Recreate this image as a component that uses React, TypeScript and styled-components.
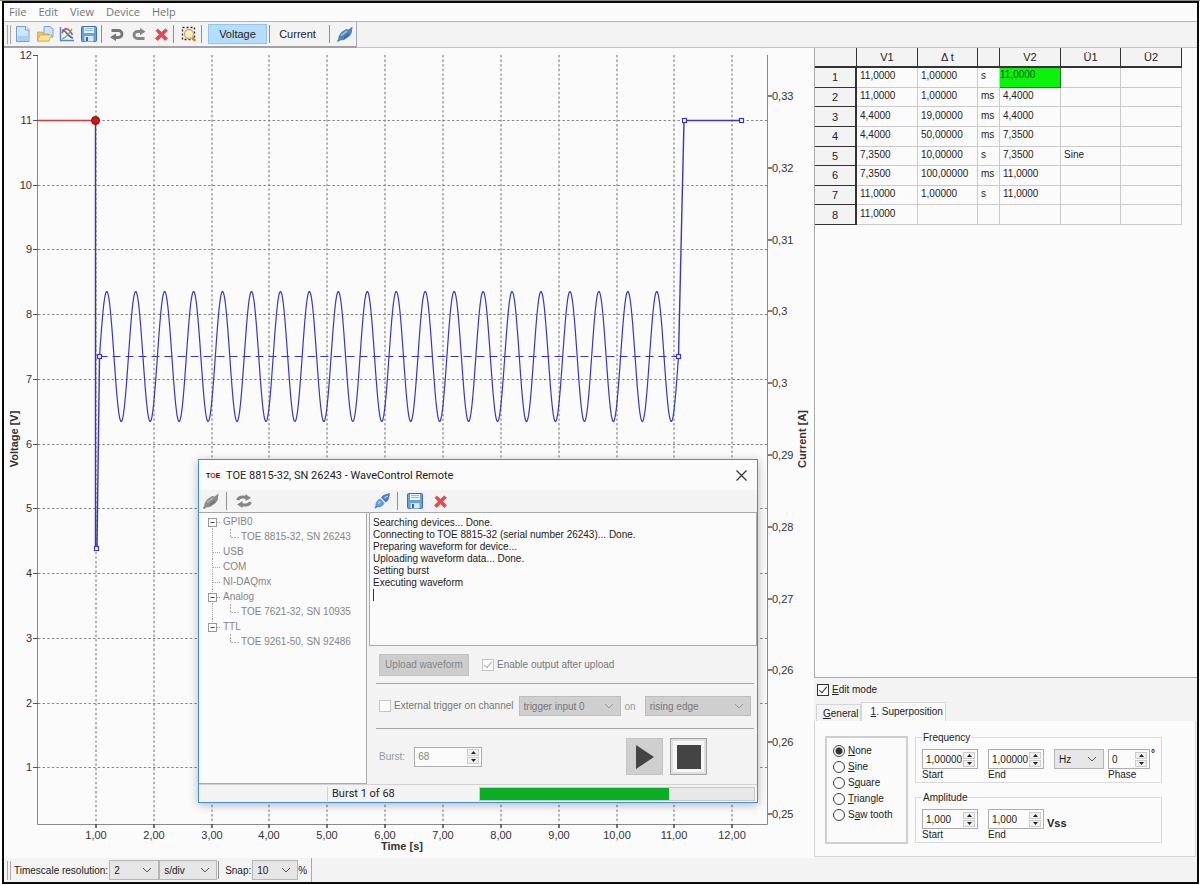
import React from "react";
import styled, { createGlobalStyle, css } from "styled-components";

const paper = "#fbfbfb";
const face = "#f3f3f3";
const line = "#a9a9a9";
const ink = "#222";
const dim = "#858585";
const blue = "#3a34c8";

const Global = createGlobalStyle`
  *, *::before, *::after { box-sizing: border-box; }
  body { margin: 0; background: #fff; }
  body, button, input, select, textarea {
    font-family: "Liberation Sans", Arial, sans-serif;
    font-size: 10px;
    color: ${ink};
  }
  button, input, textarea, select { margin: 0; }
`;

/* ---------- window frame ---------- */

const Page = styled.div`
  min-height: 100vh;
  display: flex;
  padding: 1px 1px 1px 2px;
  background: linear-gradient(#8a8d88 1px, #fff 1px);
`;
const Frame = styled.div`
  flex: 1;
  min-width: 0;
  display: flex;
  flex-direction: column;
  border: 2px solid #0a0a0a;
  background: ${face};
`;
const MenuBar = styled.nav`
  display: flex;
  align-items: center;
  gap: 12px;
  height: 19px;
  padding-left: 5px;
  background: ${paper};
  border-bottom: 1px solid #b5b5b5;
`;
const MenuItem = styled.button`
  border: 0;
  padding: 0;
  background: none;
  font-family: "Open Sans", "Noto Sans", sans-serif;
  font-size: 11px;
  line-height: 16px;
  color: #757575;
`;
const ToolStrip = styled.div`
  display: flex;
  height: 26px;
  border-bottom: 1px solid #c4c4c4;
`;
const Tools = styled.div`
  display: flex;
  align-items: center;
  height: 26px;
  padding: 0 0 0 3px;
  border-right: 1px solid ${line};
  border-bottom: 2px solid #a2a2a2;
`;
const Grip = styled.span`
  width: 4px;
  height: 19px;
  margin-right: 1px;
  border: solid ${line};
  border-width: 0 1px;
`;
const Rule = styled.span`
  width: 1px;
  height: 18px;
  margin: 0 4px 0 1px;
  background: #8f8f8f;
`;
const IconButton = styled.button`
  display: grid;
  place-items: center;
  width: 22px;
  height: 22px;
  padding: 0;
  border: 0;
  background: none;
`;
const ModeButton = styled.button<{ $on?: boolean }>`
  width: ${(p) => (p.$on ? 59 : 43)}px;
  height: 20px;
  margin: 0 ${(p) => (p.$on ? 1 : 9)}px 0 2px;
  padding: 0;
  font-size: 11px;
  border: 1px solid ${(p) => (p.$on ? "#8fc6ee" : "transparent")};
  background: ${(p) => (p.$on ? "#b5dcf8" : "none")};
`;

const Workspace = styled.main`
  flex: 1;
  display: grid;
  grid-template-columns: minmax(0, 1fr) 383px;
`;
const Left = styled.section`
  display: flex;
  flex-direction: column;
  min-width: 0;
  background: ${paper};
`;
const ChartArea = styled.div`
  position: relative;
  flex: 1;
`;
const ChartSvg = styled.svg`
  display: block;
  width: 100%;
  height: auto;
  font-size: 11px;
  fill: #333;
`;
const BottomBar = styled.div`
  display: flex;
  height: 24px;
  background: ${face};
`;
const BottomTools = styled.div`
  display: flex;
  align-items: center;
  padding: 0 4px 0 3px;
  border-right: 1px solid ${line};
`;
const BarLabel = styled.label`
  padding: 0 1px 0 2px;
  white-space: nowrap;
`;

/* ---------- shared controls ---------- */

const SelectShell = styled.span<{ $w: number; $off?: boolean }>`
  display: grid;
  grid-template-columns: 1fr 16px;
  align-items: center;
  width: ${(p) => p.$w}px;
  height: 20px;
  border: 1px solid ${(p) => (p.$off ? "#bdbdbd" : "#b5b5b5")};
  background: ${(p) => (p.$off ? "#cfcfcf" : "#e6e6e6")};
  svg {
    grid-area: 1 / 2;
    pointer-events: none;
    stroke: ${(p) => (p.$off ? "#999" : "#555")};
  }
`;
const NativeSelect = styled.select`
  grid-area: 1 / 1 / 2 / 3;
  appearance: none;
  min-width: 0;
  height: 100%;
  padding: 0 14px 0 4px;
  border: 0;
  background: none;
  &:disabled { color: #777; opacity: 1; }
`;
type SelectProps = { id?: string; label: string; w: number; off?: boolean; options: string[] };
const Select = ({ id, label, w, off, options }: SelectProps) => (
  <SelectShell $w={w} $off={off}>
    <NativeSelect id={id} aria-label={id ? undefined : label} disabled={off}>
      {options.map((o) => <option key={o}>{o}</option>)}
    </NativeSelect>
    <svg width="10" height="6" viewBox="0 0 10 6" fill="none"><path d="M1 1l4 4 4-4" /></svg>
  </SelectShell>
);

const SpinShell = styled.span<{ $w: number }>`
  display: flex;
  align-items: center;
  width: ${(p) => p.$w}px;
  height: 20px;
  padding-right: 2px;
  border: 1px solid #adadad;
  background: ${paper};
`;
const SpinInput = styled.input`
  flex: 1;
  min-width: 0;
  height: 18px;
  padding: 0 0 0 3px;
  border: 0;
  background: none;
  &:disabled { color: ${dim}; }
`;
const SpinButtons = styled.span`
  display: grid;
  width: 12px;
  gap: 1px;
`;
const SpinButton = styled.button`
  display: grid;
  place-items: center;
  height: 7px;
  padding: 0;
  border: 1px solid #ccc;
  background: #f0f0f0;
`;
type SpinProps = { id: string; w: number; value: string; off?: boolean };
const Spin = ({ id, w, value, off }: SpinProps) => (
  <SpinShell $w={w}>
    <SpinInput id={id} defaultValue={value} disabled={off} />
    <SpinButtons>
      <SpinButton aria-label="Increase"><svg width="5" height="3"><path d="M0 3L2.500 0 5 3z" fill="#222" /></svg></SpinButton>
      <SpinButton aria-label="Decrease"><svg width="5" height="3"><path d="M0 0L2.500 3 5 0z" fill="#222" /></svg></SpinButton>
    </SpinButtons>
  </SpinShell>
);

const CheckLabel = styled.label<{ $off?: boolean }>`
  display: inline-flex;
  align-items: center;
  gap: 3px;
  line-height: 14px;
  white-space: nowrap;
  color: ${(p) => (p.$off ? "#777" : ink)};
`;
const Check = styled.input.attrs({ type: "checkbox" })<{ $off?: boolean }>`
  appearance: none;
  display: grid;
  place-items: center;
  width: 12px;
  height: 12px;
  border: 1px solid ${(p) => (p.$off ? "#c4c4c4" : "#333")};
  background: ${paper};
  &:checked::after {
    content: "";
    width: 4px;
    height: 8px;
    margin-top: -2px;
    border: solid ${(p) => (p.$off ? "#aaa" : "#333")};
    border-width: 0 1px 1px 0;
    transform: rotate(40deg);
  }
`;

/* ---------- icons ---------- */

const NewIcon = () => (
  <svg width="16" height="18" viewBox="0 0 16 18">
    <path d="M1.500 1.500h9.500L14 4.500v12H1.500z" fill="#cfe6fa" stroke="#6fa0d8" />
    <path d="M2.500 11h11v5h-11z" fill="#a8d0f5" /><path d="M10.500 1.500V5H14" fill="#fff" stroke="#6fa0d8" />
  </svg>
);
const OpenIcon = () => (
  <svg width="18" height="18" viewBox="0 0 18 18">
    <path d="M8 1.500h6L17 4v8H8z" fill="#cfe3fa" stroke="#7aa2d8" />
    <path d="M1.500 7h5l1 2H13v7H1.500z" fill="#f0c766" stroke="#c39a48" strokeWidth=".7" />
    <path d="M1.500 16L4 10h12l-3 6z" fill="#fbe596" stroke="#c9a04b" strokeWidth=".7" />
  </svg>
);
const PlotIcon = () => (
  <svg width="16" height="16" viewBox="0 0 16 16" fill="none" strokeWidth="1.700">
    <path d="M1.500 1v13.500H15" stroke="#5d82ba" strokeWidth="1.400" />
    <path d="M3 7C6 1 9 1 13.500 9" stroke="#e04a4a" /><path d="M3 4c4 0 6 7 11 8" stroke="#3f6fc4" />
    <path d="M3 13c3-1 7-5 10-10" stroke="#5a9e6d" strokeWidth="1.200" />
  </svg>
);
const SaveIcon = () => (
  <svg width="16" height="16" viewBox="0 0 16 16">
    <rect x=".5" y=".5" width="15" height="15" rx="1" fill="#6a9fe2" stroke="#3c6dbd" />
    <path d="M3 1h10v6H3z" fill="#e8f3fd" /><path d="M4 2.500h8M4 4.500h8" stroke="#8ebcee" />
    <path d="M3.500 10h9v5.500h-9z" fill="#d9e9dc" /><path d="M5 11h2v4H5z" fill="#3566b8" />
  </svg>
);
const UndoIcon = () => (
  <svg width="14" height="13" viewBox="0 0 14 13">
    <path d="M1.500 2.500h7a3.500 3.500 0 0 1 0 7H5" fill="none" stroke="#777" strokeWidth="2.800" />
    <path d="M6 5.500V13L0 9.300z" fill="#777" />
  </svg>
);
const RedoIcon = () => (
  <svg width="14" height="13" viewBox="0 0 14 13">
    <path d="M12.500 10.500H5.500a3.500 3.500 0 0 1 0-7h4" fill="none" stroke="#858585" strokeWidth="2.800" />
    <path d="M8 0v7.200L13.500 3.600z" fill="#858585" />
  </svg>
);
const CrossIcon = () => (
  <svg width="13" height="13" viewBox="0 0 12 12">
    <path d="M1 2.500L2.500 1 6 4 9.500 1 11.500 2.500 8 6l3.500 3.500L9.500 11.500 6 8l-3.500 3.500L.5 9.500 4 6z" fill="#e8494d" stroke="#e0474b" strokeWidth=".8" />
  </svg>
);
const ZoomBoxIcon = () => (
  <svg width="16" height="16" viewBox="0 0 16 16" fill="none">
    <rect x="1.500" y="1.500" width="12" height="12" stroke="#333" strokeWidth="1.400" strokeDasharray="2 2" />
    <circle cx="8" cy="8" r="4.500" fill="#fbeecb" stroke="#d6a95c" strokeWidth="1.300" />
    <path d="M11.500 11.500l3 3.500" stroke="#c58a3c" strokeWidth="2.200" />
  </svg>
);
const PlugIcon = ({ gray }: { gray?: boolean }) => (
  <svg width="16" height="16" viewBox="0 0 16 16">
    <path d="M0.500 15.500L3 13" stroke={gray ? "#888" : "#6b93b8"} strokeWidth="2" />
    <path d="M1.500 14.500C.5 11 3 7 6 5l3-2 2.500.5L15.500.5 15 5C15 8 12 11 10 12l-3 2z" fill={gray ? "#8b8b8b" : "#4f83bd"} />
    <path d="M4 9.500l6-4.500" stroke={gray ? "#b0b0b0" : "#8dbbe6"} strokeWidth="1.600" />
    <path d="M7 12l5-4" stroke={gray ? "#6e6e6e" : "#2f5f9f"} strokeWidth="1.200" />
  </svg>
);
const LinkIcon = () => (
  <svg width="16" height="16" viewBox="0 0 16 16">
    <path d="M1 15l3-3" stroke="#5f8fd6" strokeWidth="2" />
    <path d="M2 13.500C1.500 10 3.500 6.500 6.500 6L10 10.500C8.500 13.500 5 14.500 2 13.500z" fill="#6a9be2" stroke="#3d6fc0" strokeWidth=".6" />
    <path d="M7.500 4.500C9 1.500 12 2 15.500.5 15 4 14.500 8.500 11.500 9z" fill="#4a80d4" stroke="#3364b5" strokeWidth=".6" />
    <path d="M4 10.500L6.500 8.500M10.500 5l3-2" stroke="#b5d2f6" strokeWidth="1.500" />
  </svg>
);
const RefreshIcon = () => (
  <svg width="16" height="14" viewBox="0 0 16 14" fill="none" stroke="#858585" strokeWidth="3">
    <path d="M1.500 6C3 2.500 7 2.500 11 3.500" /><path d="M9.500 0L15 4 9.500 7z" fill="#858585" stroke="none" />
    <path d="M14.500 8c-1 3-5 3.500-9 2.500" /><path d="M6.500 7L1 10.500 6.500 14z" fill="#858585" stroke="none" />
  </svg>
);

/* ---------- chart ---------- */

const xAt = (t: number) => 38 + t * 57.85;
const yAt = (v: number) => 55.5 + (12 - v) * 64.75;
const volts = [12, 11, 10, 9, 8, 7, 6, 5, 4, 3, 2, 1];
const secs = [1, 2, 3, 4, 5, 6, 7, 8, 9, 10, 11, 12];
const amps = ["0,33", "0,32", "0,31", "0,3", "0,3", "0,29", "0,28", "0,27", "0,26", "0,26", "0,25"];
const startX = 99.5;
const endX = 678.5;
const midY = 356.5;
const sine = Array.from({ length: 1159 }, (_, i) => {
  const x = startX + i * 0.5;
  const y = midY - 65 * Math.sin(((x - startX) / (endX - startX)) * 20 * 2 * Math.PI);
  return `${x},${y.toFixed(1)}`;
}).join(" ");
const nodes = [[96, 548], [99, 356], [678, 356], [684, 120], [741, 120]];

const Chart = () => (
  <ChartSvg viewBox="4 48 810 810" role="img" aria-label="Voltage waveform over time">
    <g stroke="#858585" strokeWidth="1.200" strokeDasharray="2.400 2.200">
      {volts.slice(1).map((v) => <path key={v} d={`M38 ${Math.floor(yAt(v))}.5H767`} />)}
      {secs.map((s) => <path key={s} d={`M${Math.round(xAt(s))} 55V822`} />)}
    </g>
    <path d="M37.500 55V824.500H767.500V55" fill="none" stroke="#8a8a8a" />
    {volts.map((v) => (
      <g key={v}>
        <path d={`M33 ${Math.floor(yAt(v))}.5h5`} stroke="#555" />
        <text x="32" y={Math.floor(yAt(v)) + 4} textAnchor="end">{v}</text>
      </g>
    ))}
    {secs.map((s) => (
      <g key={s}>
        <path d={`M${Math.round(xAt(s))} 824v4`} stroke="#444" strokeWidth="1.500" />
        <text x={Math.round(xAt(s))} y="839" textAnchor="middle">{s},00</text>
      </g>
    ))}
    {amps.map((a, i) => (
      <g key={i}>
        <path d={`M768 ${Math.round(96 + i * 71.8)}h4`} stroke="#555" strokeWidth="1.500" />
        <text x="772" y={Math.round(96 + i * 71.8) + 4}>{a}</text>
      </g>
    ))}
    <g fontWeight="bold" textAnchor="middle">
      <text x="402" y="850">Time [s]</text>
      <text transform="translate(18 439) rotate(-90)">Voltage [V]</text>
      <text transform="translate(806 439) rotate(-90)">Current [A]</text>
    </g>
    <path d={`M${startX} ${midY}H${endX}`} stroke={blue} strokeDasharray="8 5" />
    <polyline points={sine} fill="none" stroke={blue} strokeWidth="1.200" />
    <path d="M95.500 120V548M97 548L99.500 356.500M678.500 356.500L684 120.500H741" fill="none" stroke={blue} strokeWidth="1.400" />
    <path d="M38 120.500H95" stroke="#d93a3a" strokeWidth="1.300" />
    {nodes.map(([x, y]) => <rect key={x} x={x - 1.5} y={y - 1.5} width="4" height="4" fill="#fff" stroke={blue} strokeWidth="1.200" />)}
    <circle cx="95.500" cy="120.500" r="4" fill="#e01010" stroke="#6b1010" />
  </ChartSvg>
);

/* ---------- remote dialog ---------- */

const Dialog = styled.section`
  position: absolute;
  left: 194px;
  top: 411px;
  width: 560px;
  display: flex;
  flex-direction: column;
  border: 1px solid #3f8fdc;
  background: ${face};
  box-shadow: 0 2px 9px rgba(0, 0, 0, 0.28);
`;
const TitleBar = styled.header`
  display: flex;
  align-items: center;
  height: 30px;
  padding: 0 8px 0 7px;
  background: ${paper};
`;
const Title = styled.h1`
  flex: 1;
  margin: 0 0 0 5px;
  font: 400 11px Roboto, sans-serif;
  color: #222;
`;
const Logo = styled.span`
  width: 15px;
  font-size: 7px;
  font-weight: 700;
  color: #111;
  b { color: #d02020; }
`;
const CloseButton = styled.button`
  display: grid;
  padding: 2px;
  border: 0;
  background: none;
`;
const DialogTools = styled.div`
  display: grid;
  grid-template-columns: 171px 1fr;
  height: 23px;
  border-bottom: 1px solid ${line};
`;
const ToolGroup = styled.div`
  display: flex;
  align-items: center;
  padding-left: 1px;
`;
const DialogRule = styled(Rule)`
  margin: 0 6px 0 4px;
`;
const DialogGap = styled.span`
  width: 3px;
`;
const DialogBody = styled.div`
  display: grid;
  grid-template-columns: 168px minmax(0, 1fr);
  gap: 2px;
`;
const Tree = styled.ul`
  margin: 0;
  padding: 1px 0 0 8px;
  list-style: none;
  border: solid ${line};
  border-width: 0 1px 1px 0;
  background: ${paper};
  color: ${dim};
`;
const TreeRow = styled.li`
  display: flex;
  align-items: center;
  height: 15px;
  white-space: nowrap;
`;
type Node = { text: string; child?: boolean; open?: boolean; first?: boolean; last?: boolean; rail?: boolean };
const treeNodes: Node[] = [
  { text: "GPIB0", open: true, first: true },
  { text: "TOE 8815-32, SN 26243", child: true, rail: true },
  { text: "USB" },
  { text: "COM" },
  { text: "NI-DAQmx" },
  { text: "Analog", open: true },
  { text: "TOE 7621-32, SN 10935", child: true, rail: true },
  { text: "TTL", open: true, last: true },
  { text: "TOE 9261-50, SN 92486", child: true },
];
const TreeGlyph = ({ n }: { n: Node }) => (
  <svg width={n.child ? 34 : 16} height="15" fill="none" stroke="#aaa">
    {n.child ? (
      <><path d="M23.500 0v8.500h8" strokeDasharray="2 1" />{n.rail && <path d="M5.500 0v15" strokeDasharray="1 1" />}</>
    ) : (
      <path d={`M5.500 ${n.first ? 8 : 0}V${n.last ? 8 : 15}M6 8.500h8`} strokeDasharray="1 1" />
    )}
    {n.open && <><rect x="1.500" y="4.500" width="8" height="8" fill="#fbfbfb" stroke="#999" /><path d="M3.500 8.500h4" stroke="#445" /></>}
  </svg>
);

const Control = styled.div`
  display: flex;
  flex-direction: column;
`;
const LogWrap = styled.div`
  position: relative;
  display: grid;
  grid-template-columns: minmax(0, 1fr);
`;
const Log = styled.textarea`
  height: 133px;
  padding: 4px 3px;
  border: 1px solid ${line};
  border-top: 0;
  background: ${paper};
  resize: none;
  line-height: 12px;
  outline: 0;
  color: #222;
`;
const Caret = styled.span`
  position: absolute;
  left: 4px;
  top: 76px;
  width: 1px;
  height: 12px;
  background: #333;
`;
const ControlRow = styled.div<{ $h: number }>`
  display: flex;
  align-items: center;
  height: ${(p) => p.$h}px;
  margin: 0 3px 0 7px;
  padding: 0 2px 0 3px;
  color: #999;
  & + & { border-top: 1px solid #a6a6ac; }
`;
const Field = styled.span<{ $l: number }>`
  display: inline-flex;
  align-items: center;
  gap: 4px;
  margin-left: ${(p) => p.$l}px;
`;
const UploadButton = styled.button`
  width: 90px;
  height: 22px;
  padding: 0;
  border: 1px solid #c2c2c2;
  background: #cdcdcd;
  &:disabled { color: ${dim}; }
`;
const Transport = styled.span`
  display: flex;
  gap: 7px;
  margin: 0 45px 0 auto;
`;
const TransportButton = styled.button<{ $focus?: boolean }>`
  display: grid;
  place-items: center;
  width: 37px;
  height: 37px;
  padding: 0;
  background: #cfcfcf;
  border: 1px solid #c4c4c4;
  ${(p) => p.$focus && css`
    background: #f6f6f6;
    border: 1px solid #a5a5a5;
    box-shadow: inset 0 0 0 2px #dedede;
  `}
`;
const Status = styled.footer`
  display: grid;
  grid-template-columns: 128px 1fr 276px;
  align-items: center;
  height: 18px;
  padding-right: 2px;
  border-top: 1px solid #d2d2d2;
`;
const StatusCell = styled.span`
  display: flex;
  align-items: center;
  height: 14px;
  padding-left: 4px;
  border-left: 1px solid #d0d0d0;
  font: 400 11px Roboto, sans-serif;
`;
const Track = styled.div`
  height: 14px;
  border: 1px solid #c9c9c9;
  background: #e8e8e8;
`;
const Fill = styled.div`
  height: 12px;
  background: #09ae24;
`;

const logText = [
  "Searching devices... Done.",
  "Connecting to TOE 8815-32 (serial number 26243)... Done.",
  "Preparing waveform for device...",
  "Uploading waveform data... Done.",
  "Setting burst",
  "Executing waveform",
].join("\n");
const progress = 69;

const RemoteDialog = () => (
  <Dialog role="dialog" aria-labelledby="remote-title">
    <TitleBar>
      <Logo>T<b>O</b>E</Logo>
      <Title id="remote-title">TOE 8815-32, SN 26243 - WaveControl Remote</Title>
      <CloseButton aria-label="Close">
        <svg width="11" height="11" stroke="#333" strokeWidth="1.200"><path d="M.5 .5l10 10M10.500 .5l-10 10" /></svg>
      </CloseButton>
    </TitleBar>
    <DialogTools>
      <ToolGroup>
        <IconButton aria-label="Disconnected"><PlugIcon gray /></IconButton><DialogRule />
        <IconButton aria-label="Refresh"><RefreshIcon /></IconButton>
      </ToolGroup>
      <ToolGroup>
        <IconButton aria-label="Connect"><LinkIcon /></IconButton><DialogRule />
        <IconButton aria-label="Save log"><SaveIcon /></IconButton>
        <DialogGap />
        <IconButton aria-label="Clear log"><CrossIcon /></IconButton>
      </ToolGroup>
    </DialogTools>
    <DialogBody>
      <Tree>
        {treeNodes.map((n) => <TreeRow key={n.text}><TreeGlyph n={n} />{n.text}</TreeRow>)}
      </Tree>
      <Control>
        <LogWrap><Log readOnly aria-label="Log" value={logText} /><Caret /></LogWrap>
        <ControlRow $h={37}>
          <UploadButton disabled>Upload waveform</UploadButton>
          <Field $l={13}><CheckLabel $off><Check $off defaultChecked disabled />Enable output after upload</CheckLabel></Field>
        </ControlRow>
        <ControlRow $h={45}>
          <CheckLabel $off><Check $off disabled />External trigger on channel</CheckLabel>
          <Field $l={5}><Select label="Trigger channel" w={102} off options={["trigger input 0"]} />on</Field>
          <Field $l={9}><Select label="Trigger edge" w={106} off options={["rising edge"]} /></Field>
        </ControlRow>
        <ControlRow $h={56}>
          <label htmlFor="burst">Burst:</label>
          <Field $l={9}><Spin id="burst" w={68} value="68" off /></Field>
          <Transport>
            <TransportButton aria-label="Play"><svg width="18" height="24"><path d="M0 0l18 12L0 24z" fill="#444" /></svg></TransportButton>
            <TransportButton aria-label="Stop" $focus><svg width="24" height="24"><path d="M0 0h24v24H0z" fill="#444" /></svg></TransportButton>
          </Transport>
        </ControlRow>
      </Control>
    </DialogBody>
    <Status>
      <span />
      <StatusCell>Burst 1 of 68</StatusCell>
      <Track role="progressbar" aria-label="Burst progress" aria-valuenow={progress}><Fill style={{ width: `${progress}%` }} /></Track>
    </Status>
  </Dialog>
);

/* ---------- right side ---------- */

const Right = styled.section`
  display: flex;
  flex-direction: column;
  min-width: 0;
  padding-bottom: 25px;
`;
const TablePane = styled.div`
  flex: 1;
  border: solid ${line};
  border-width: 0 0 1px 1px;
  background: ${paper};
`;
const Table = styled.table`
  width: 367px;
  height: 177px;
  table-layout: fixed;
  border-collapse: separate;
  border-spacing: 0;
`;
const Col = styled.col<{ $w: number }>`
  width: ${(p) => p.$w}px;
`;
const head = css`
  padding: 0;
  font-weight: 400;
  text-align: center;
  background: ${face};
  border: solid #333;
  border-width: 0 1px 1px 0;
`;
const HeadCell = styled.th`
  ${head}
  height: 20px;
  border-bottom-width: 2px;
  font-size: 11px;
`;
const RowHead = styled.th`
  ${head}
  border-right-width: 2px;
  font-size: 11px;
  line-height: 12px;
`;
const Cell = styled.td<{ $hot?: boolean; $unit?: boolean }>`
  padding: 0 0 2px 3px;
  border: solid #cbcbcb;
  border-width: 0 1px 1px 0;
  line-height: 12px;
  white-space: nowrap;
  ${(p) => p.$hot && css`
    padding: 0 0 4px 0;
    line-height: 10px;
    background: #0cf20c;
    border-color: #1a7a1a;
    color: #0a5a0a;
  `}
`;
const rows = [
  ["11,0000", "1,00000", "s", "11,0000", "", ""],
  ["11,0000", "1,00000", "ms", "4,4000", "", ""],
  ["4,4000", "19,00000", "ms", "4,4000", "", ""],
  ["4,4000", "50,00000", "ms", "7,3500", "", ""],
  ["7,3500", "10,00000", "s", "7,3500", "Sine", ""],
  ["7,3500", "100,00000", "ms", "11,0000", "", ""],
  ["11,0000", "1,00000", "s", "11,0000", "", ""],
  ["11,0000", "", "", "", "", ""],
];

const EditRow = styled.div`
  padding: 5px 0 0 3px;
  height: 24px;
`;
const TabList = styled.div`
  display: flex;
  align-items: flex-end;
  padding-left: 2px;
`;
const Tab = styled.button<{ $on?: boolean }>`
  height: ${(p) => (p.$on ? 19 : 17)}px;
  padding: 0 ${(p) => (p.$on ? "2px 2px 9px" : "1px 0 6px")};
  border: 1px solid #d6d6d6;
  border-bottom: 0;
  background: ${(p) => (p.$on ? paper : face)};
  text-align: left;
`;
const TabPanel = styled.div`
  display: flex;
  align-items: flex-start;
  gap: 7px;
  height: 136px;
  margin-right: 1px;
  padding: 10px 33px 0 10px;
  border: 1px solid #d6d6d6;
  border-top: 0;
  background: ${paper};
`;
const ShapeBox = styled.fieldset`
  display: flex;
  flex-direction: column;
  gap: 1px;
  width: 83px;
  height: 108px;
  margin: 5px 0 0;
  padding: 5px 0 0 6px;
  border: 2px solid #cfcfcf;
`;
const RadioLabel = styled.label`
  display: flex;
  align-items: center;
  gap: 3px;
  height: 15px;
`;
const Radio = styled.input.attrs({ type: "radio" })`
  appearance: none;
  width: 12px;
  height: 12px;
  border: 1px solid #444;
  border-radius: 50%;
  &:checked { background: radial-gradient(circle, #333 3px, ${paper} 4px); }
`;
const Groups = styled.div`
  flex: 1;
  display: flex;
  flex-direction: column;
  gap: 8px;
`;
const Group = styled.fieldset`
  display: flex;
  align-items: flex-start;
  height: 52px;
  min-width: 0;
  margin: 0;
  padding: 5px 0 0 6px;
  border: 1px solid #dadada;
`;
const Legend = styled.legend`
  padding: 0 1px;
  line-height: 13px;
`;
const Stack = styled.div<{ $gap?: number }>`
  display: flex;
  flex-direction: column;
  margin-right: ${(p) => p.$gap ?? 10}px;
  label { line-height: 12px; }
`;
const Unit = styled.span<{ $big?: boolean }>`
  font-weight: 700;
  font-size: ${(p) => (p.$big ? 11 : 10)}px;
  line-height: ${(p) => (p.$big ? 28 : 10)}px;
`;

const shapes: [string, string, string][] = [
  ["", "N", "one"], ["", "S", "ine"], ["S", "q", "uare"], ["", "T", "riangle"], ["S", "a", "w tooth"],
];

export default function App() {
  return (
    <>
      <Global />
      <Page>
        <Frame>
          <MenuBar>
            {["File", "Edit", "View", "Device", "Help"].map((m) => <MenuItem key={m}>{m}</MenuItem>)}
          </MenuBar>
          <ToolStrip>
            <Tools>
              <Grip />
              <IconButton aria-label="New"><NewIcon /></IconButton>
              <IconButton aria-label="Open"><OpenIcon /></IconButton>
              <IconButton aria-label="Plot"><PlotIcon /></IconButton>
              <IconButton aria-label="Save"><SaveIcon /></IconButton>
              <Rule />
              <IconButton aria-label="Undo"><UndoIcon /></IconButton>
              <IconButton aria-label="Redo"><RedoIcon /></IconButton>
              <IconButton aria-label="Delete"><CrossIcon /></IconButton>
              <Rule />
              <IconButton aria-label="Zoom to selection"><ZoomBoxIcon /></IconButton>
              <Rule />
              <ModeButton $on aria-pressed="true">Voltage</ModeButton>
              <Rule />
              <ModeButton aria-pressed="false">Current</ModeButton>
              <Rule />
              <IconButton aria-label="Device"><PlugIcon /></IconButton>
            </Tools>
          </ToolStrip>
          <Workspace>
            <Left>
              <ChartArea>
                <Chart />
                <RemoteDialog />
              </ChartArea>
              <BottomBar>
                <BottomTools>
                  <Grip />
                  <BarLabel htmlFor="timescale">Timescale resolution:</BarLabel>
                  <Select id="timescale" label="Timescale" w={50} options={["2"]} />
                  <Select label="Timescale unit" w={58} options={["s/div"]} />
                  <Rule />
                  <BarLabel htmlFor="snap">Snap:</BarLabel>
                  <Select id="snap" label="Snap" w={46} options={["10"]} />%
                </BottomTools>
              </BottomBar>
            </Left>
            <Right>
              <TablePane>
                <Table>
                  <colgroup>
                    {[42, 61, 60, 22, 61, 60, 61].map((w, i) => <Col key={i} $w={w} />)}
                  </colgroup>
                  <thead>
                    <tr>{["", "V1", "Δ t", "", "V2", "Ü1", "Ü2"].map((h, i) => <HeadCell key={i}>{h}</HeadCell>)}</tr>
                  </thead>
                  <tbody>
                    {rows.map((r, y) => (
                      <tr key={y}>
                        <RowHead>{y + 1}</RowHead>
                        {r.map((c, x) => <Cell key={x} $unit={x === 2} $hot={y === 0 && x === 3}>{c}</Cell>)}
                      </tr>
                    ))}
                  </tbody>
                </Table>
              </TablePane>
              <EditRow><CheckLabel><Check defaultChecked /><span><u>E</u>dit mode</span></CheckLabel></EditRow>
              <TabList role="tablist">
                <Tab role="tab" aria-selected="false"><u>G</u>eneral</Tab>
                <Tab role="tab" aria-selected="true" $on><u>1</u>. Superposition</Tab>
              </TabList>
              <TabPanel role="tabpanel">
                <ShapeBox aria-label="Wave shape">
                  {shapes.map(([a, u, b], i) => (
                    <RadioLabel key={b}><Radio name="shape" defaultChecked={i === 0} /><span>{a}<u>{u}</u>{b}</span></RadioLabel>
                  ))}
                </ShapeBox>
                <Groups>
                  <Group>
                    <Legend>Frequency</Legend>
                    <Stack><Spin id="f-start" w={56} value="1,00000" /><label htmlFor="f-start">Start</label></Stack>
                    <Stack><Spin id="f-end" w={56} value="1,00000" /><label htmlFor="f-end">End</label></Stack>
                    <Stack $gap={4}><Select label="Frequency unit" w={50} options={["Hz"]} /></Stack>
                    <Stack $gap={1}><Spin id="phase" w={42} value="0" /><label htmlFor="phase">Phase</label></Stack>
                    <Unit>°</Unit>
                  </Group>
                  <Group>
                    <Legend>Amplitude</Legend>
                    <Stack><Spin id="a-start" w={56} value="1,000" /><label htmlFor="a-start">Start</label></Stack>
                    <Stack $gap={3}><Spin id="a-end" w={56} value="1,000" /><label htmlFor="a-end">End</label></Stack>
                    <Unit $big>Vss</Unit>
                  </Group>
                </Groups>
              </TabPanel>
            </Right>
          </Workspace>
        </Frame>
      </Page>
    </>
  );
}
